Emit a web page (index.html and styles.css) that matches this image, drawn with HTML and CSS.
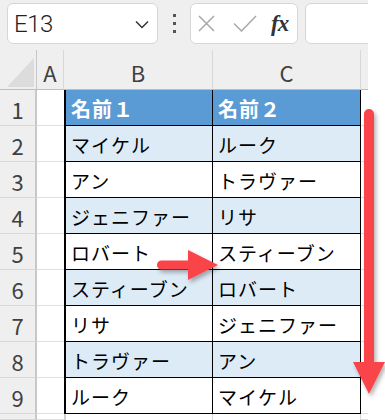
FILE: index.html
```html
<!DOCTYPE html>
<html lang="ja">
<head>
<meta charset="utf-8">
<link rel="stylesheet" href="styles.css">
</head>
<body>
<div class="page">
  <div class="app">
    <div class="toolbar">
      <div class="namebox">
        <span class="ref">E13</span>
        <svg class="chev" width="14" height="9" viewBox="0 0 14 9"><path d="M1 1.5 L7 7.5 L13 1.5" fill="none" stroke="#333" stroke-width="1.5"/></svg>
      </div>
      <div class="dots"><i></i><i></i><i></i></div>
      <div class="fxbox">
        <svg width="17" height="17" viewBox="0 0 17 17"><path d="M1 1 L16 16 M16 1 L1 16" stroke="#a8a8a8" stroke-width="1.5" fill="none"/></svg>
        <svg width="24" height="17" viewBox="0 0 24 17"><path d="M1 8.5 L8.5 16 L23 1" stroke="#a8a8a8" stroke-width="1.5" fill="none"/></svg>
        <span class="fx">fx</span>
      </div>
      <div class="formula"></div>
    </div>
    <div class="sheet">
      <div class="corner"><span class="tri"></span></div>
      <div class="ch">A</div>
      <div class="ch">B</div>
      <div class="ch">C</div>
      <div class="ch d"></div>

      <div class="rh">1</div><div class="a"></div><div class="cb hd">名前１</div><div class="cc hd">名前２</div><div class="dd"></div>
      <div class="rh">2</div><div class="a"></div><div class="cb alt">マイケル</div><div class="cc alt">ルーク</div><div class="dd"></div>
      <div class="rh">3</div><div class="a"></div><div class="cb">アン</div><div class="cc">トラヴァー</div><div class="dd"></div>
      <div class="rh">4</div><div class="a"></div><div class="cb alt">ジェニファー</div><div class="cc alt">リサ</div><div class="dd"></div>
      <div class="rh">5</div><div class="a"></div><div class="cb">ロバート</div><div class="cc">スティーブン</div><div class="dd"></div>
      <div class="rh">6</div><div class="a"></div><div class="cb alt">スティーブン</div><div class="cc alt">ロバート</div><div class="dd"></div>
      <div class="rh">7</div><div class="a"></div><div class="cb">リサ</div><div class="cc">ジェニファー</div><div class="dd"></div>
      <div class="rh">8</div><div class="a"></div><div class="cb alt">トラヴァー</div><div class="cc alt">アン</div><div class="dd"></div>
      <div class="rh">9</div><div class="a"></div><div class="cb">ルーク</div><div class="cc">マイケル</div><div class="dd"></div>
      <div class="rh"></div><div class="a"></div><div class="pb"></div><div class="pc"></div><div class="dd"></div>
    </div>
  </div>
  <svg class="arrows" width="385" height="420" viewBox="0 0 385 420">
    <defs>
      <filter id="sh" x="-50%" y="-50%" width="200%" height="200%">
        <feDropShadow dx="2" dy="3" stdDeviation="2" flood-color="#000" flood-opacity="0.3"/>
      </filter>
    </defs>
    <path filter="url(#sh)" fill="#f9444a" d="M364,114 A5,5 0 0 1 374,114 L374,362 L385,362 L369,394 L353,362 L364,362 Z"/>
    <path filter="url(#sh)" fill="#f9444a" d="M161.5,260.5 H188 V250 L218,265 L188,280 V269.5 H161.5 A4.5,4.5 0 0 1 161.5,260.5 Z"/>
  </svg>
</div>
</body>
</html>
```

FILE: styles.css
```css
* { box-sizing: border-box; }
html, body { margin: 0; padding: 0; background: #fff; }
.page {
  position: relative;
  width: 385px;
  height: 420px;
  overflow: hidden;
  background: #fff;
  font-family: "Noto Sans CJK JP", "Noto Sans", sans-serif;
}
.app {
  width: 368px;
  height: 420px;
  background: #efefef;
  overflow: hidden;
}
.toolbar {
  height: 50px;
  display: flex;
  align-items: flex-start;
  padding: 3px 0 0 7px;
}
.namebox {
  width: 151px;
  height: 41px;
  flex: none;
  background: #fff;
  border: 1px solid #d6d6d6;
  border-radius: 6px;
  display: flex;
  align-items: center;
  justify-content: space-between;
  padding: 0 8px 0 6px;
}
.ref {
  font-family: Roboto, "Noto Sans", sans-serif;
  font-weight: 300;
  font-size: 24px;
  color: #222;
  letter-spacing: -0.5px;
}
.chev { margin-top: 2px; }
.dots {
  width: 32px;
  height: 41px;
  flex: none;
  display: flex;
  flex-direction: column;
  align-items: center;
  justify-content: center;
  gap: 5px;
}
.dots i {
  display: block;
  width: 3px;
  height: 3px;
  background: #555;
}
.fxbox {
  width: 108px;
  height: 41px;
  flex: none;
  background: #fff;
  border: 1px solid #d6d6d6;
  border-radius: 6px;
  display: flex;
  align-items: center;
  padding: 0 0 0 7px;
  gap: 18px;
}
.fx {
  font-family: "Liberation Serif", serif;
  font-style: italic;
  font-weight: bold;
  font-size: 23px;
  color: #333;
  margin-left: -4px;
  letter-spacing: -1px;
}
.formula {
  width: 90px;
  height: 41px;
  flex: none;
  margin-left: 7px;
  background: #fff;
  border: 1px solid #d6d6d6;
  border-radius: 6px;
}
.sheet {
  display: grid;
  grid-template-columns: 37px 27px 149px 148px 7px;
  grid-template-rows: 40px repeat(9, 36px) 6px;
}
.corner {
  position: relative;
  background: #efefef;
  border-right: 1px solid #c8c8c8;
  border-bottom: 1px solid #bdbdbd;
}
.tri {
  position: absolute;
  left: 7px;
  top: 8px;
  width: 27px;
  height: 29px;
  background: #dcdcdc;
  clip-path: polygon(100% 0, 100% 100%, 0 100%);
}
.ch {
  background: #efefef;
  border-right: 1px solid #d8d8d8;
  border-bottom: 1px solid #bdbdbd;
  display: flex;
  align-items: center;
  justify-content: center;
  font-family: "Noto Sans CJK JP", sans-serif;
  font-size: 22px;
  color: #404040;
  padding-top: 4px;
}
.ch.d { border-right: none; }
.rh {
  background: #efefef;
  border-right: 2px solid #c8c8c8;
  border-bottom: 1px solid #d8d8d8;
  display: flex;
  align-items: center;
  justify-content: center;
  font-size: 22px;
  color: #404040;
  padding-top: 2px;
}
.a {
  background: #fff;
  border-bottom: 1px solid #e0e0e0;
}
.dd {
  background: #fff;
  border-bottom: 1px solid #e0e0e0;
}
.cb, .cc {
  background: #fff;
  border-right: 1px solid #000;
  border-bottom: 1px solid #000;
  display: flex;
  align-items: center;
  font-size: 19px;
  letter-spacing: 1px;
  color: #000;
  white-space: nowrap;
  overflow: hidden;
  padding: 2px 0 0 5px;
}
.cb { border-left: 2px solid #000; }
.alt { background: #ddebf7; }
.hd {
  background: #5b9bd5;
  color: #fff;
  font-weight: bold;
  font-size: 20px;
}
.pb {
  background: #fff;
  border-left: 2px solid #d0d0d0;
  border-right: 1px solid #d8d8d8;
}
.pc {
  background: #fff;
  border-right: 1px solid #d8d8d8;
}
.arrows {
  position: absolute;
  left: 0;
  top: 0;
  pointer-events: none;
}
```
